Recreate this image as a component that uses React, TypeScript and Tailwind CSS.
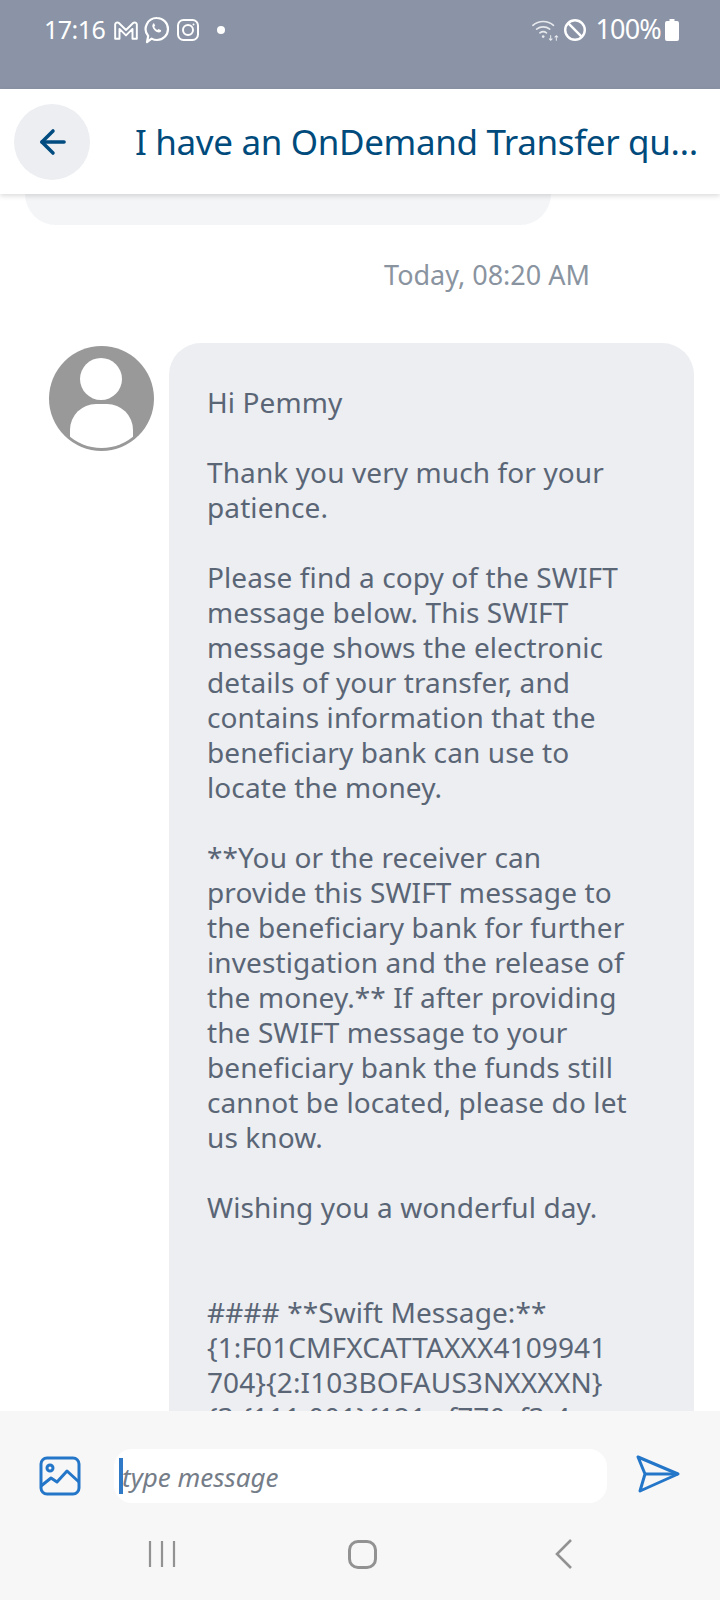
import React from 'react';
import { ArrowLeft } from 'lucide-react';

const lines = [
  'Hi Pemmy',
  '',
  'Thank you very much for your',
  'patience.',
  '',
  'Please find a copy of the SWIFT',
  'message below. This SWIFT',
  'message shows the electronic',
  'details of your transfer, and',
  'contains information that the',
  'beneficiary bank can use to',
  'locate the money.',
  '',
  '**You or the receiver can',
  'provide this SWIFT message to',
  'the beneficiary bank for further',
  'investigation and the release of',
  'the money.** If after providing',
  'the SWIFT message to your',
  'beneficiary bank the funds still',
  'cannot be located, please do let',
  'us know.',
  '',
  'Wishing you a wonderful day.',
  '',
  '',
  '#### **Swift Message:**',
  '{1:F01CMFXCATTAXXX4109941',
  '704}{2:I103BOFAUS3NXXXXN}',
  '{3:{111:001}{121:cf770cf3-4',
];

const App: React.FC = () => {
  return (
    <div className="w-[720px] h-[1600px] flex flex-col overflow-hidden bg-white font-['Noto_Sans',sans-serif]">
      {/* status bar */}
      <div className="h-[89px] shrink-0 bg-[#8a94a6] flex items-start justify-between pl-[44px] pr-[41px] pt-[12px] text-white">
        <div className="flex items-center h-[36px]">
          <span className="text-[25px] tracking-[-0.5px]">17:16</span>
          <svg width="26" height="22" viewBox="0 0 24 20" fill="none" stroke="white" strokeWidth="1.800" className="ml-[8px]">
            <path d="M2 18V5a2 2 0 0 1 3.400-1.400L12 10l6.600-6.400A2 2 0 0 1 22 5v13h-4V9l-6 6-6-6v9z" strokeLinejoin="round" />
          </svg>
          <svg width="26" height="28" viewBox="0 0 26 28" fill="none" stroke="white" strokeWidth="2.200" className="ml-[5px]">
            <path d="M13 2a11 11 0 0 1 0 22c-2 0-3.800-.5-5.400-1.400L3 26l1.200-6A11 11 0 0 1 13 2z" strokeLinejoin="round" />
            <path d="M9 8c-1.500 1.500-.5 4 1.500 6.200 2.200 2.200 4.800 3 6.300 1.500l.4-1.400-2.800-1.400-1 1c-1.300-.5-2.700-1.900-3.200-3.200l1-1-1.300-2.800z" fill="white" stroke="none" />
          </svg>
          <svg width="24" height="24" viewBox="0 0 24 24" fill="none" stroke="white" strokeWidth="2" className="ml-[6px]">
            <rect x="2" y="2" width="20" height="20" rx="5.500" />
            <circle cx="12" cy="12" r="5" />
            <circle cx="17.500" cy="6.500" r="1" fill="white" stroke="none" />
          </svg>
          <div className="w-[8px] h-[8px] rounded-full bg-white ml-[17px]" />
        </div>
        <div className="flex items-center h-[36px]">
          <svg width="30" height="26" viewBox="0 0 32 26" fill="none" stroke="white" strokeWidth="1.800" strokeLinecap="round" opacity="0.8">
            <path d="M2 8a17 17 0 0 1 22 0" />
            <path d="M6 12a11.500 11.500 0 0 1 14 0" />
            <path d="M9.500 16a6 6 0 0 1 7 0" />
            <circle cx="13" cy="20" r="1.400" fill="white" stroke="none" />
            <path d="M21 19v5M19.500 22.500l1.500 1.500 1.500-1.500M27 24v-5M25.500 20.500l1.500-1.500 1.500 1.500" strokeWidth="1.100" />
          </svg>
          <svg width="24" height="24" viewBox="0 0 24 24" fill="none" stroke="white" strokeWidth="2.400" className="ml-[2px]">
            <circle cx="12" cy="12" r="9.800" />
            <path d="M5.200 5.200l13.600 13.600" />
          </svg>
          <span className="text-[27px] leading-[34px] tracking-[-0.8px] ml-[8px] -mt-[2px]">100%</span>
          <svg width="14" height="22" viewBox="0 0 14 22" fill="white" className="ml-[4px]">
            <path d="M4.500 0h5v2h2.500A2 2 0 0 1 14 4v16a2 2 0 0 1-2 2H2a2 2 0 0 1-2-2V4a2 2 0 0 1 2-2h2.500z" />
          </svg>
        </div>
      </div>

      {/* header */}
      <div className="relative z-10 h-[105px] shrink-0 bg-white flex items-center pl-[14px] pr-[14px] shadow-[0_2px_5px_rgba(0,0,0,0.14)]">
        <div className="w-[76px] h-[76px] shrink-0 rounded-full bg-[#eceef1] flex items-center justify-center">
          <ArrowLeft size={38} strokeWidth={2.200} className="text-[#004b80] ml-[1px]" />
        </div>
        <div className="ml-[45px] flex-1 min-w-0 truncate text-[35px] leading-[48px] tracking-[-0.35px] text-[#004b7c]">
          I have an OnDemand Transfer question
        </div>
      </div>

      {/* messages */}
      <div className="flex-1 min-h-0 overflow-hidden">
        <div className="ml-[25px] w-[526px] h-[31px] rounded-b-[32px] bg-[#f3f5f7]" />
        <div className="mt-[33px] pr-[130px] text-right text-[27px] leading-[34px] text-[#8a94a0]">Today, 08:20 AM</div>
        <div className="mt-[51px] flex items-start pl-[49px] pr-[26px]">
          <div className="relative w-[105px] h-[105px] mt-[3px] shrink-0 rounded-full bg-[#999999]">
            <div className="absolute inset-[3px] rounded-full overflow-hidden">
              <div className="absolute left-[28px] top-[9px] w-[42px] h-[42px] rounded-full bg-white" />
              <div className="absolute left-[18px] top-[55px] w-[63px] h-[50px] rounded-t-[26px] bg-white" />
            </div>
          </div>
          <div className="ml-[15px] flex-1 rounded-[32px] bg-[#eceef1] pt-[42px] pl-[38px] pr-[20px] pb-[40px] text-[28px] leading-[35px] tracking-[0.1px] text-[#5a6576]">
            {lines.map((line, i) => (
              <div key={i} className="h-[35px] whitespace-nowrap">{line}</div>
            ))}
          </div>
        </div>
      </div>

      {/* composer */}
      <div className="h-[189px] shrink-0 bg-[#f7f7f7] flex flex-col">
        <div className="flex items-center h-[126px] pt-[4px] pl-[39px]">
          <svg width="44" height="42" viewBox="0 0 44 42" fill="none" stroke="#2476c9" strokeWidth="3" strokeLinejoin="round" className="shrink-0 -mt-[1px] -ml-[1px]">
            <rect x="3" y="3" width="38" height="36" rx="6" />
            <circle cx="12" cy="13" r="3" />
            <path d="M3 31l10-8 6 4 10-11 12 11" />
          </svg>
          <div className="ml-[32px] w-[493px] h-[54px] rounded-[18px] bg-white flex items-center pl-[5px]">
            <div className="w-[4px] h-[36px] bg-[#2f79c7] shrink-0" />
            <span className="text-[26px] leading-[36px] italic text-[#757d88] -ml-[1px] mt-[1px]">type message</span>
          </div>
          <svg width="44" height="40" viewBox="0 0 44 40" fill="none" stroke="#2476c9" strokeWidth="3" strokeLinejoin="round" className="ml-[29px] shrink-0 -mt-[4px]">
            <path d="M2 3l40 17L4 37l5-17z" />
            <path d="M9 20h33" />
          </svg>
        </div>
        <div className="flex items-center justify-between pl-[148px] pr-[146px] h-[40px] -mt-[3px]">
          <svg width="28" height="30" viewBox="0 0 28 30" stroke="#929292" strokeWidth="2.200" fill="none">
            <path d="M2 2v26M14 2v26M26 2v26" />
          </svg>
          <div className="w-[29px] h-[29px] rounded-[10px] border-[3px] border-[#929292] -ml-[6px]" />
          <svg width="20" height="32" viewBox="0 0 20 32" stroke="#929292" strokeWidth="2.600" fill="none">
            <path d="M17 2L3 16l14 14" />
          </svg>
        </div>
      </div>
    </div>
  );
};

export default App;
